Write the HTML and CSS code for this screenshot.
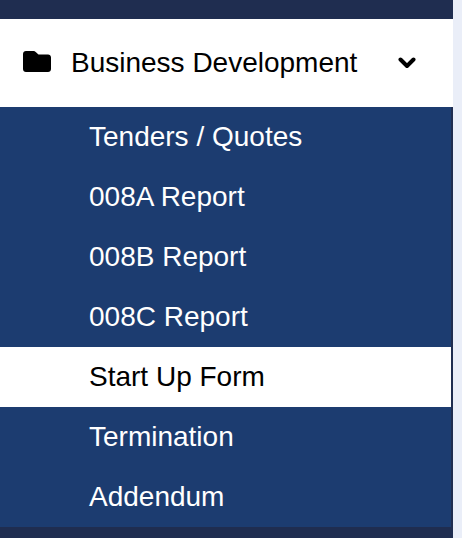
FILE: index.html
```html
<!DOCTYPE html>
<html lang="en">
<head>
<meta charset="utf-8">
<title>Menu</title>
<link rel="stylesheet" href="styles.css">
</head>
<body>
<nav class="sidebar">
  <div class="group-head">
    <svg class="folder" viewBox="0 0 28 21" aria-hidden="true"><path d="M3 0h7.6c.8 0 1.500.3 2.100.9L15.500 3.600H25c1.700 0 3 1.300 3 3V18c0 1.700-1.300 3-3 3H3c-1.700 0-3-1.300-3-3V3c0-1.700 1.300-3 3-3z"/></svg>
    <span class="group-title">Business Development</span>
    <svg class="chev" viewBox="0 0 18 12" aria-hidden="true"><path d="M2.500 2.500L9 9l6.500-6.500" fill="none" stroke="#000" stroke-width="4" stroke-linecap="round" stroke-linejoin="round"/></svg>
  </div>
  <ul class="items">
    <li class="item">Tenders / Quotes</li>
    <li class="item">008A Report</li>
    <li class="item">008B Report</li>
    <li class="item">008C Report</li>
    <li class="item active">Start Up Form</li>
    <li class="item">Termination</li>
    <li class="item">Addendum</li>
  </ul>
</nav>
</body>
</html>
```
FILE: styles.css
```css
html, body { margin: 0; padding: 0; height: 100%; overflow: hidden; }
body { background: #eaeef8; font-family: "Liberation Sans", Arial, sans-serif; }
.sidebar { width: 453px; height: 538px; box-sizing: border-box; background: #1f2d50; padding: 19px 0 11px; }
.group-head { height: 88px; background: #fff; display: flex; align-items: center; color: #000; padding-left: 23px; }
.folder { width: 28px; height: 21px; flex: none; margin-right: 20px; margin-top: -3px; }
.group-title { font-size: 28px; line-height: 1; width: 327px; flex: none; }
.chev { width: 18px; height: 12px; flex: none; margin-top: -1px; }
.items { list-style: none; margin: 0; padding: 0; width: 451px; background: #1c3c70; }
.item { height: 60px; line-height: 60px; padding-left: 89px; font-size: 28px; color: #fff; }
.item.active { background: #fff; color: #000; }
```
